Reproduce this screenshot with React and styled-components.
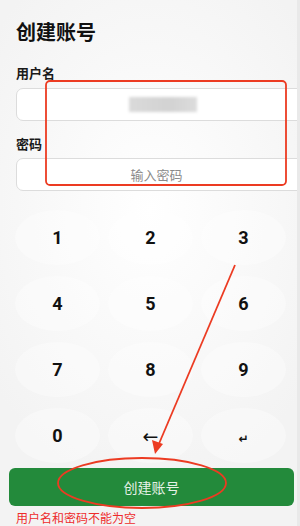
import styled, { createGlobalStyle } from 'styled-components';

const GlobalStyle = createGlobalStyle`
  html, body {
    margin: 0;
    padding: 0;
    width: 300px;
    height: 526px;
    overflow: hidden;
  }
  body {
    font-family: Roboto, "Noto Sans CJK SC", sans-serif;
    background: #f1f1f1;
  }
`

const keys = ['1', '2', '3', '4', '5', '6', '7', '8', '9', '0', '←', '↵'];

function App() {
  return (
    <>
      <GlobalStyle />
      <StPage>
        <StForm>
          <StTitle>创建账号</StTitle>
          <StLabel>用户名</StLabel>
          <StField $top={5}>
            <StBlurred />
          </StField>
          <StLabel $gap={13}>密码</StLabel>
          <StField $top={4}>
            <StPlaceholder>输入密码</StPlaceholder>
          </StField>
        </StForm>

        <StKeypad>
          {keys.map((k) => (
            <StKey key={k} $kind={k === '←' ? 'back' : k === '↵' ? 'enter' : 'digit'}>
              {k}
            </StKey>
          ))}
        </StKeypad>

        <StSubmit>创建账号</StSubmit>
        <StError>用户名和密码不能为空</StError>

        <StMarks viewBox="0 0 300 526" width="300" height="526">
          <rect x="46" y="81" width="240" height="104" rx="4" fill="none" stroke="#ec3b22" strokeWidth="1.8" />
          <line x1="235" y1="265" x2="158" y2="446" stroke="#ec3b22" strokeWidth="1.8" />
          <polygon points="155,454 152,440 163,444" fill="#ec3b22" />
          <ellipse cx="142" cy="483" rx="84" ry="25" fill="none" stroke="#ec3b22" strokeWidth="1.8" />
        </StMarks>
      </StPage>
    </>
  )
}

export default App

const StPage = styled.div`
  position: relative;
  width: 300px;
  height: 526px;
  overflow: hidden;
  box-sizing: border-box;
  border-right: 3px solid #e9e9e9;
  background: radial-gradient(ellipse 200px 280px at 150px 210px, #ffffff 0%, #f9f9f9 50%, #f3f3f3 100%);
`

const StForm = styled.div`
  display: flex;
  flex-direction: column;
  padding: 18px 0 0 16px;
`

const StTitle = styled.h1`
  margin: 0;
  font-family: "Noto Sans CJK SC", sans-serif;
  font-size: 20px;
  line-height: 28px;
  font-weight: 700;
  color: #111;
`

const StLabel = styled.div`
  margin-top: ${(p) => p.$gap || 17}px;
  font-family: "Noto Sans CJK SC", sans-serif;
  font-size: 13px;
  line-height: 20px;
  font-weight: 700;
  color: #1a1a1a;
`

const StField = styled.div`
  margin-top: ${(p) => p.$top}px;
  width: calc(100% + 10px);
  height: 33px;
  box-sizing: border-box;
  display: flex;
  align-items: center;
  justify-content: center;
  padding-right: 10px;
  background: #fff;
  border: 1px solid #dcdcdc;
  border-radius: 7px;
`

const StBlurred = styled.span`
  width: 68px;
  height: 15px;
  margin-left: 12px;
  background: linear-gradient(90deg, #dadada 0%, #d2d2d2 60%, #dcdcdc 100%);
  filter: blur(1.5px);
`

const StPlaceholder = styled.span`
  font-family: "Noto Sans CJK SC", sans-serif;
  font-size: 13px;
  color: #8a8a8a;
`

const StKeypad = styled.div`
  display: grid;
  grid-template-columns: repeat(3, 85px);
  grid-auto-rows: 55px;
  column-gap: 8px;
  row-gap: 11px;
  padding: 19px 0 0 15px;
`

const StKey = styled.div`
  display: flex;
  align-items: center;
  justify-content: center;
  border-radius: 50%;
  background: rgba(255, 255, 255, 0.35);
  color: #111;
  font-family: ${(p) => (p.$kind === 'digit' ? 'Roboto, sans-serif' : '"DejaVu Sans", sans-serif')};
  font-size: ${(p) => (p.$kind === 'digit' ? '18px' : p.$kind === 'back' ? '19px' : '12px')};
  font-weight: ${(p) => (p.$kind === 'back' ? 400 : 700)};
  padding-top: ${(p) => (p.$kind === 'enter' ? '6px' : '0')};
  box-sizing: border-box;
`

const StSubmit = styled.button`
  display: flex;
  align-items: center;
  justify-content: center;
  margin: 5px 3px 0 9px;
  width: 285px;
  height: 38px;
  border: none;
  border-radius: 6px;
  background: #238a3b;
  color: #e6f1e7;
  font-family: "Noto Sans CJK SC", sans-serif;
  font-size: 14px;
`

const StError = styled.div`
  margin: 5px 0 0 16px;
  font-family: "Noto Sans CJK SC", sans-serif;
  font-size: 12px;
  line-height: 14px;
  color: #ee2b2b;
`

const StMarks = styled.svg`
  position: absolute;
  left: 0;
  top: 0;
  pointer-events: none;
`
